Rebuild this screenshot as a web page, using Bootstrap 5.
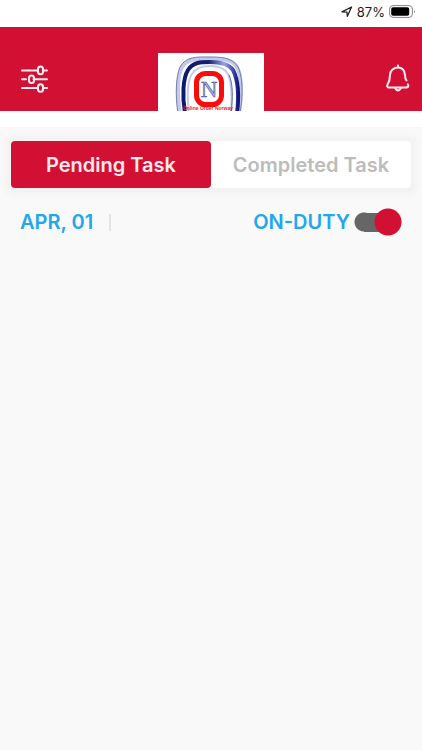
<!DOCTYPE html>
<html lang="en">
<head>
<meta charset="utf-8">
<meta name="viewport" content="width=device-width, initial-scale=1">
<title>Pending Task</title>
<link href="https://cdn.jsdelivr.net/npm/bootstrap@5.3.0/dist/css/bootstrap.min.css" rel="stylesheet">
<style>
  :root { --brand: #d21033; --accent: #22a7ef; }
  body { background: #f9f9f9; font-family: Inter, "Open Sans", sans-serif; }
  .status-bar { height: 27px; padding: 0 6px; gap: 4px; font-size: 13px; line-height: 24px; color: #1c1c1c; align-items: flex-start; }
  .status-bar svg { margin-top: 5px; }
  .app-header { background: var(--brand); height: 84px; padding: 0 10px 0 20px; }
  .icon-btn { line-height: 0; margin-top: 19px; }
  .brand-logo { line-height: 0; }
  .header-gap { height: 16px; }
  .task-tabs { margin: 14px 11px 0; border-radius: 4px; box-shadow: 0 1px 6px 6px #f2f2f2; }
  .task-tabs .nav-link { height: 47px; padding: 0; border-radius: 4px; font-size: 20px; font-weight: 600; color: #bcbcbc; }
  .task-tabs .nav-link.active { background: var(--brand); color: #ffe9ee; }
  .duty-row { padding: 0 20px; margin-top: 20px; color: var(--accent); font-size: 20px; line-height: 28px; font-weight: 600; }
  .date-label { gap: 16px; }
  .date-rule { width: 2px; height: 17px; background: #e4e4e4; }
  .duty-switch { width: 48px; height: 28px; margin: 0; border: 0; border-radius: 0; appearance: none; cursor: pointer;
    background: radial-gradient(circle at 34px 14px, var(--brand) 13px, transparent 14px),
      radial-gradient(circle at 10px 14px, #666 9px, transparent 10px),
      linear-gradient(#666, #666) 10px 5px / 26px 19px no-repeat; }
  .duty-switch:not(:checked) { transform: scaleX(-1); }
  .logo-letter { font-family: "Liberation Serif", serif; font-size: 23px; }
  .logo-name { font-family: "Liberation Sans Narrow", "Liberation Sans", sans-serif; font-size: 5px; font-weight: 700; }
</style>
</head>
<body>
<div class="status-bar d-flex justify-content-end bg-white">
  <svg width="12" height="13" viewBox="0 0 12 13" fill="none" stroke="#222" stroke-width="1.3" stroke-linejoin="round" aria-hidden="true"><path d="M1 6.8 10.5 2 6.4 11.3 5.9 7.1Z"/></svg>
  <span>87%</span>
  <svg width="27" height="13" viewBox="0 0 27 13" aria-hidden="true"><rect x=".6" y=".6" width="22.8" height="11.8" rx="3.4" fill="#fff" stroke="#858585"/><rect x="2.2" y="2.2" width="18" height="8.6" rx="1.8"/><path d="M25 4.5q1.5 2 0 4Z" fill="#858585"/></svg>
</div>

<header class="app-header d-flex justify-content-between position-relative">
  <button type="button" class="icon-btn btn border-0 p-0" aria-label="Filters">
    <svg width="30" height="30" viewBox="0 0 30 30" fill="none" stroke="#ffeef1" stroke-width="2" stroke-linecap="round"><path d="M2 6.5h15M24 6.5h3M2 15.2h4M13.5 15.2H27M2 24h15M24 24h3"/><rect x="18" y="2.6" width="5" height="7.6" rx="2.5"/><rect x="9" y="11.4" width="5" height="7.6" rx="2.5"/><rect x="18" y="20.2" width="5" height="7.6" rx="2.5"/></svg>
  </button>
  <div class="brand-logo position-absolute bottom-0 start-50 translate-middle-x">
    <svg width="106" height="58" viewBox="0 0 106 58" role="img" aria-label="Online Order Norway">
      <defs>
        <linearGradient id="rim" x1="0" x2="1"><stop offset="0" stop-color="#101b6b"/><stop offset=".45" stop-color="#141c70"/><stop offset=".75" stop-color="#9aa6e6"/><stop offset="1" stop-color="#10157c"/></linearGradient>
        <filter id="soft"><feGaussianBlur stdDeviation=".7"/></filter>
      </defs>
      <rect width="106" height="58" fill="#fff"/>
      <g fill="none">
        <path d="M22 60C19 42 19 23 24 14 30 5 41 6 51 6S74 5 79 14C84 24 84 43 81 60" stroke="#c3caee" stroke-width="4" filter="url(#soft)"/>
        <path d="M20 60C17 42 18 24 22 14 28 3 40 4 51 4S74 4 80 14C85 24 85 43 82 60" stroke="#767eaa"/>
        <path d="M27 60C24 43 25 25 30 17 35 9 43 9 52 9S70 10 75 17C81 29 81 44 79 60" stroke="url(#rim)" stroke-width="4" filter="url(#soft)"/>
        <path d="M31 60C29 43 29 28 34 21 38 14 45 13 52 13S66 14 70 21C74 30 74 44 73 60" stroke="#c3caec" stroke-width="2" filter="url(#soft)"/>
        <path d="M73 60C75 45 75 30 71 22" stroke="#5c6bb2"/>
        <rect x="38.5" y="20.500" width="25" height="31" rx="9" fill="#fff" stroke="#fb0b0b" stroke-width="5"/>
      </g>
      <text class="logo-letter" x="51" y="44" text-anchor="middle" fill="#a9b3da" stroke="#34459b" stroke-width=".5">N</text>
      <text class="logo-name" x="50" y="57" text-anchor="middle" fill="#f01818">Online Order Norway</text>
    </svg>
  </div>
  <button type="button" class="icon-btn btn border-0 p-0" aria-label="Notifications">
    <svg width="30" height="34" viewBox="0 0 30 34" fill="none" stroke="#ffeef1" stroke-width="2" stroke-linecap="round" stroke-linejoin="round"><path d="M24.5 18.5C23.3 17 23 15.5 23 13 23 8.500 20 5.500 16 5.500S8 8.500 8 13C8 18 7.500 19.500 5.500 22.500 4.800 24 5.300 25.500 7 25.500H24C26.300 25.500 27 23.800 25.800 22.300M16 5V3.500"/><path d="M13 26Q16 31 19 26"/></svg>
  </button>
</header>
<div class="header-gap bg-white"></div>

<main>
  <div class="task-tabs nav nav-pills nav-justified flex-nowrap bg-white" role="tablist">
    <button type="button" class="nav-link active" role="tab" aria-selected="true">Pending Task</button>
    <button type="button" class="nav-link" role="tab" aria-selected="false">Completed Task</button>
  </div>
  <div class="duty-row d-flex justify-content-between align-items-center">
    <div class="date-label d-flex align-items-center"><span>APR, 01</span><span class="date-rule"></span></div>
    <div class="d-flex align-items-center gap-1">
      <label for="duty">ON-DUTY</label>
      <input class="duty-switch" type="checkbox" role="switch" id="duty" checked>
    </div>
  </div>
</main>
<script src="https://cdn.jsdelivr.net/npm/bootstrap@5.3.0/dist/js/bootstrap.bundle.min.js"></script>
</body>
</html>
